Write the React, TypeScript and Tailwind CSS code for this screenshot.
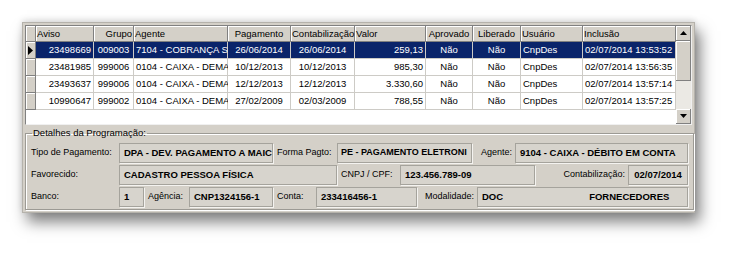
import React from 'react';

type Col = { title: string; w: number; head: string; cell: string };

const cols: Col[] = [
  { title: 'Aviso', w: 58, head: 'left', cell: 'right' },
  { title: 'Grupo', w: 40, head: 'right', cell: 'center' },
  { title: 'Agente', w: 94, head: 'left', cell: 'left' },
  { title: 'Pagamento', w: 63, head: 'center', cell: 'center' },
  { title: 'Contabilização', w: 64, head: 'left', cell: 'center' },
  { title: 'Valor', w: 71, head: 'left', cell: 'right' },
  { title: 'Aprovado', w: 47, head: 'center', cell: 'center' },
  { title: 'Liberado', w: 48, head: 'center', cell: 'center' },
  { title: 'Usuário', w: 62, head: 'left', cell: 'left' },
  { title: 'Inclusão', w: 93, head: 'left', cell: 'left' },
];

const rows = [
  ['23498669', '009003', '7104 - COBRANÇA S', '26/06/2014', '26/06/2014', '259,13', 'Não', 'Não', 'CnpDes', '02/07/2014 13:53:52'],
  ['23481985', '999006', '0104 - CAIXA - DEMA', '10/12/2013', '10/12/2013', '985,30', 'Não', 'Não', 'CnpDes', '02/07/2014 13:56:35'],
  ['23493637', '999006', '0104 - CAIXA - DEMA', '12/12/2013', '12/12/2013', '3.330,60', 'Não', 'Não', 'CnpDes', '02/07/2014 13:57:14'],
  ['10990647', '999002', '0104 - CAIXA - DEMA', '27/02/2009', '02/03/2009', '788,55', 'Não', 'Não', 'CnpDes', '02/07/2014 13:57:25'],
];

const justify = (a: string) => (a === 'center' ? 'justify-center' : a === 'right' ? 'justify-end' : 'justify-start');

const bevel = 'bg-[#d4d0c8] border-r border-b border-r-[#808080] border-b-[#808080] shadow-[inset_1px_1px_0_#ffffff]';

const Field: React.FC<{ w: number; children?: React.ReactNode; className?: string }> = ({ w, children, className }) => (
  <div
    style={{ width: w }}
    className={`h-[20px] shrink-0 flex items-center font-bold bg-[#d7d4cd] border border-[#a5a39c] shadow-[1px_1px_0_#f4f3f0] whitespace-nowrap overflow-hidden ${className ?? 'px-[4px] text-[9.5px]'}`}
  >
    {children}
  </div>
);

const Label: React.FC<{ w: number; right?: boolean; first?: boolean; children: React.ReactNode }> = ({ w, right, first, children }) => (
  <div style={{ width: w }} className={`shrink-0 whitespace-nowrap ${right ? 'text-right pr-[3px]' : first ? '' : 'pl-[4px]'}`}>
    {children}
  </div>
);

const Arrow: React.FC<{ up?: boolean }> = ({ up }) => (
  <div className={`h-[15px] flex items-center justify-center ${bevel}`}>
    <svg width="7" height="4" viewBox="0 0 7 4">
      <path d={up ? 'M3.5 0 L7 4 L0 4 Z' : 'M0 0 L7 0 L3.5 4 Z'} fill="#000" />
    </svg>
  </div>
);

export default function App() {
  return (
    <div className="w-[738px] h-[255px] bg-white pt-[22px] pl-[22px] font-['Liberation_Sans',Arial,sans-serif] text-black">
      <div className="w-[673px] h-[191px] bg-[#d4d0c8] border border-[#b5b2ab] p-[2px] flex flex-col shadow-[5px_9px_14px_rgba(0,0,0,0.5),0_-2px_6px_rgba(0,0,0,0.12)]">
        {/* grade */}
        <div className="h-[101px] flex bg-white border border-t-[#808080] border-l-[#808080] border-b-[#f0f0f0] border-r-[#f0f0f0]">
          <div className="flex-1 overflow-hidden text-[9.5px] leading-none">
            <div className="flex h-[16px]">
              <div className={`w-[10px] shrink-0 ${bevel}`} />
              {cols.map(c => (
                <div key={c.title} style={{ width: c.w }} className={`shrink-0 px-[1px] flex items-center whitespace-nowrap ${bevel} ${justify(c.head)}`}>
                  {c.title}
                </div>
              ))}
            </div>
            {rows.map((r, i) => (
              <div key={i} className="flex h-[17px]">
                <div className={`w-[10px] shrink-0 flex items-center justify-center ${bevel}`}>
                  {i === 0 && (
                    <svg width="5" height="9" viewBox="0 0 5 9">
                      <path d="M0 0 L5 4.5 L0 9 Z" fill="#000" />
                    </svg>
                  )}
                </div>
                {cols.map((c, j) => (
                  <div
                    key={j}
                    style={{ width: c.w }}
                    className={`shrink-0 px-[2px] flex items-center whitespace-nowrap border-r border-b border-[#cdcbc6] ${i === 0 ? 'bg-[#0a246a] text-white' : 'bg-white'} ${justify(c.cell)}`}
                  >
                    {r[j]}
                  </div>
                ))}
              </div>
            ))}
          </div>
          {/* barra de rolagem */}
          <div className="w-[15px] flex flex-col bg-[#ebe9e4]">
            <Arrow up />
            <div className={`h-[40px] ${bevel}`} />
            <div className="flex-1" />
            <Arrow />
          </div>
        </div>

        {/* detalhes */}
        <fieldset className="mt-[2px] flex-1 border border-[#9c9a94] shadow-[1px_1px_0_#ffffff,inset_1px_1px_0_#ffffff] px-[5px] pb-[2px] text-[9px]">
          <legend className="ml-[1px] px-[1px] leading-[12px] text-[9.5px]">Detalhes da Programação:</legend>
          <div className="flex flex-col gap-[2px] pt-[4px]">
            <div className="flex items-center">
              <Label w={88} first>Tipo de Pagamento:</Label>
              <Field w={154}>DPA - DEV. PAGAMENTO A MAIC</Field>
              <Label w={64}>Forma Pagto:</Label>
              <Field w={135} className="px-[3px] text-[9px]">PE - PAGAMENTO ELETRONI</Field>
              <Label w={43} right>Agente:</Label>
              <Field w={173}>9104 - CAIXA - DÉBITO EM CONTA</Field>
            </div>
            <div className="flex items-center">
              <Label w={88} first>Favorecido:</Label>
              <Field w={218}>CADASTRO PESSOA FÍSICA</Field>
              <Label w={63}>CNPJ / CPF:</Label>
              <Field w={135}>123.456.789-09</Field>
              <Label w={93} right>Contabilização:</Label>
              <Field w={60} className="justify-center text-[9.5px]">02/07/2014</Field>
            </div>
            <div className="flex items-center">
              <Label w={88} first>Banco:</Label>
              <Field w={25}>1</Field>
              <Label w={45}>Agência:</Label>
              <Field w={84}>CNP1324156-1</Field>
              <Label w={43}>Conta:</Label>
              <Field w={101}>233416456-1</Field>
              <Label w={60} right>Modalidade:</Label>
              <Field w={211}>
                <span>DOC</span>
                <span className="ml-[86px]">FORNECEDORES</span>
              </Field>
            </div>
          </div>
        </fieldset>
      </div>
    </div>
  );
}
